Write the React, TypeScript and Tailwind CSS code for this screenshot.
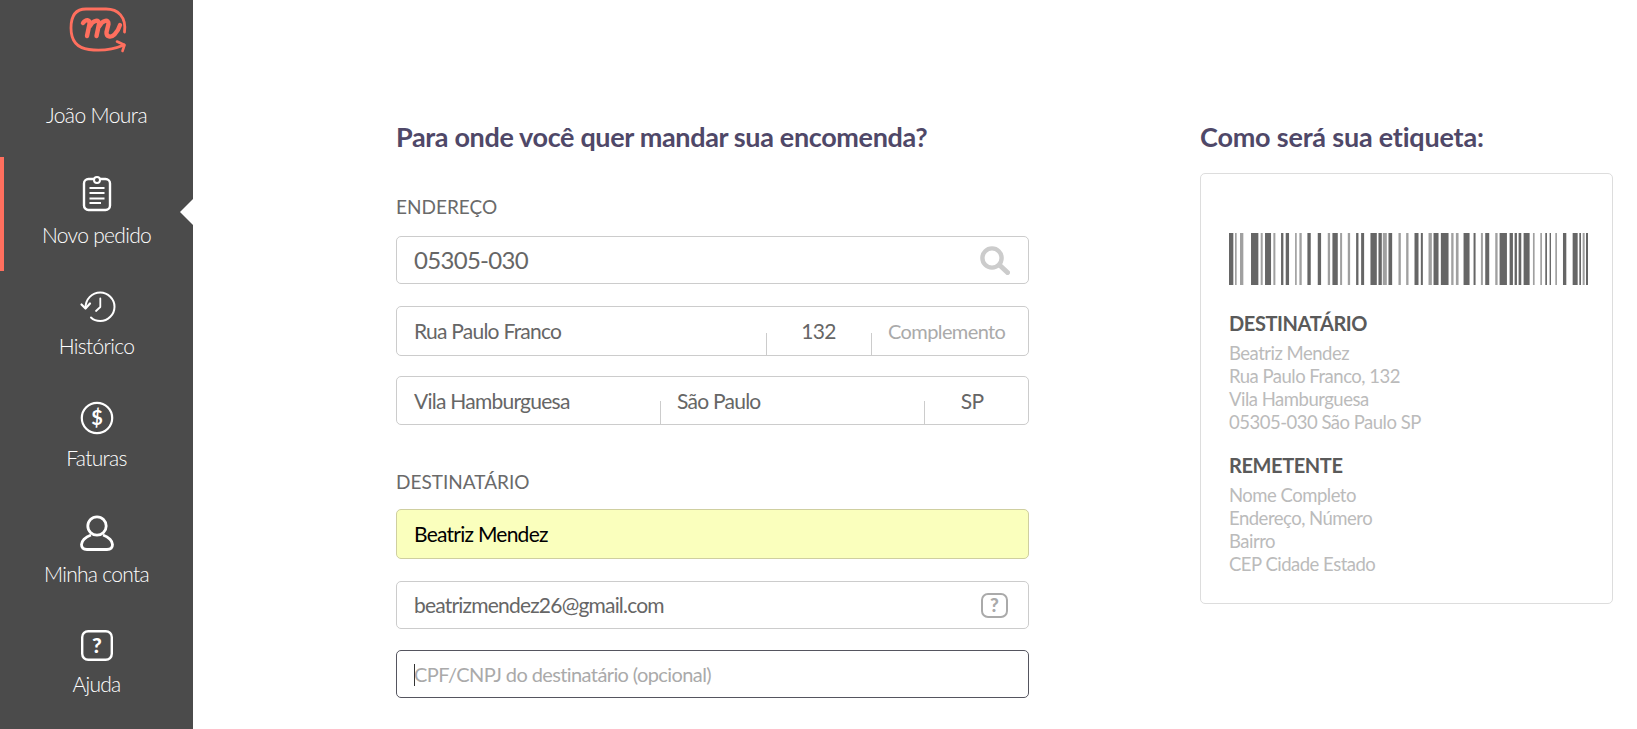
const font = { fontFamily: 'Lato, sans-serif' }

const barcode = [
  [117, 130, 1], [135, 140, 0], [150, 160, 0], [183, 205, 1], [212, 218, 0], [225, 243, 1], [250, 256, 0],
  [273, 280, 1], [287, 297, 1], [315, 320, 0], [328, 335, 0], [352, 362, 1], [383, 393, 1], [413, 420, 0],
  [427, 443, 1], [450, 456, 0], [473, 480, 0], [498, 505, 1], [513, 522, 1], [541, 560, 1], [565, 575, 1],
  [578, 590, 0], [595, 606, 1], [625, 632, 0], [648, 655, 0], [673, 685, 1], [692, 698, 1], [715, 725, 0],
  [730, 745, 1], [752, 775, 1], [783, 790, 0], [797, 805, 0], [820, 838, 1], [850, 856, 1], [872, 878, 0],
  [885, 897, 1], [915, 922, 0], [928, 950, 1], [958, 968, 1], [973, 980, 1], [985, 993, 1], [1000, 1018, 1],
  [1028, 1033, 0], [1050, 1055, 0], [1065, 1070, 1], [1078, 1082, 1], [1095, 1100, 0], [1118, 1128, 1],
  [1147, 1162, 1], [1167, 1172, 1], [1177, 1183, 0], [1187, 1193, 1],
]

function Logo() {
  return (
    <svg width="70" height="60" viewBox="0 0 70 60" fill="none" stroke="#ff6f5e" strokeLinecap="round" strokeLinejoin="round">
      <path d="M62.5 32C64.5 17 56 9 44 9L24 9C14 9 9 16 9 28C9 41 15 48 27 49.5C37 50.8 50 50 62 45" strokeWidth="2.8" />
      <path d="M55 41.5L62.5 45L60.5 51" strokeWidth="2.6" />
      <path d="M21 23C24 19 28 19 27.5 24L25 36" strokeWidth="4.4" />
      <path d="M28 26C31 20 37.5 19 37 24L34.5 36" strokeWidth="4.4" />
      <path d="M37.5 26C40.5 20 47 19 46.5 24L44.5 32C44 37 49 38 52.5 34.5C55 32 57 28.5 58 25" strokeWidth="4.4" />
    </svg>
  )
}

function ClipboardIcon() {
  return (
    <svg width="30" height="36" viewBox="0 0 30 36" fill="none" stroke="white">
      <rect x="2" y="3" width="26" height="31" rx="4.5" strokeWidth="2.4" />
      <circle cx="15" cy="4" r="3" fill="#4b4b4b" strokeWidth="2" />
      <path d="M7.5 12H22.5M7.5 17H22.5M7.5 22.5H22.5M7.5 27H19" strokeWidth="1.8" />
    </svg>
  )
}

function HistoryIcon() {
  return (
    <svg width="50" height="38" viewBox="0 0 50 38" fill="none" stroke="white" strokeLinecap="round" strokeLinejoin="round">
      <path d="M13.5 23C13.5 14 20 7.5 28.3 7.5C36 7.5 42.5 14 42.5 21.7C42.5 29.5 36 36 28.3 36C25 36 21.5 35 19 32.5" strokeWidth="2" />
      <path d="M9.5 19.5L13.5 23.5L18 18.5" strokeWidth="2.2" />
      <path d="M28.3 13.5V22L24 26" strokeWidth="1.8" />
    </svg>
  )
}

function DollarIcon() {
  return (
    <svg width="34" height="34" viewBox="0 0 34 34" fill="none" stroke="white">
      <circle cx="17" cy="17" r="15.2" strokeWidth="2.2" />
      <text x="17" y="24" textAnchor="middle" fill="white" stroke="none" fontSize="20" fontWeight="700" fontFamily="Lato, sans-serif">$</text>
    </svg>
  )
}

function PersonIcon() {
  return (
    <svg width="34" height="36" viewBox="0 0 34 36" fill="none" stroke="white" strokeWidth="2.8">
      <circle cx="17" cy="11" r="9.2" />
      <path d="M11 20C5 22 1.5 26 1.5 29.5C1.5 33 4 34.5 7 34.5H27C30 34.5 32.5 33 32.5 29.5C32.5 26 29 22 23 20" />
    </svg>
  )
}

function HelpIcon({ width, height, color, size, stroke }: { width: number; height: number; color: string; size: number; stroke: number }) {
  return (
    <svg width={width} height={height} viewBox={`0 0 ${width} ${height}`} fill="none" stroke={color}>
      <rect x={stroke / 2} y={stroke / 2} width={width - stroke} height={height - stroke} rx="6" strokeWidth={stroke} />
      <text x={width / 2} y={height / 2 + size * 0.36} textAnchor="middle" fill={color} stroke="none" fontSize={size} fontWeight="900" fontFamily="Lato, sans-serif">?</text>
    </svg>
  )
}

function SearchIcon() {
  return (
    <svg width="30" height="29" viewBox="0 0 30 29" fill="none" stroke="#cccccc" strokeLinecap="round">
      <circle cx="12" cy="12" r="9.6" strokeWidth="4.4" />
      <path d="M20 19.5L27.5 26.5" strokeWidth="5" />
    </svg>
  )
}

function NavItem({ label, icon, active, height }: { label: string; icon: React.ReactNode; active?: boolean; height: string }) {
  return (
    <div className={`relative flex flex-col items-center ${height}`}>
      {active ? <div className="absolute left-0 top-0 h-[114px] w-1 bg-[#ff6f5e]" /> : null}
      {active ? (
        <div className="absolute right-0 top-[42px] h-0 w-0 border-y-[13px] border-r-[13px] border-y-transparent border-r-white" />
      ) : null}
      <div className="flex h-[55px] items-end justify-center">{icon}</div>
      <div className="mt-[9px] text-[21px] leading-[28px] font-light tracking-[-0.7px] text-white">{label}</div>
    </div>
  )
}

function Cell({ text, width, center, muted, divider, tall }: { text: string; width: string; center?: boolean; muted?: boolean; divider?: boolean; tall?: boolean }) {
  return (
    <div className={`relative flex items-center ${width} ${center ? 'justify-center' : 'pl-[17px]'}`}>
      {divider ? <div className={`absolute left-0 bottom-0 w-px bg-[#cccccc] ${tall ? 'h-[23px]' : 'h-[22px]'}`} /> : null}
      <span className={muted ? 'text-[20px] tracking-[-0.6px] text-[#aaaaaa]' : 'text-[21px] tracking-[-0.75px] text-[#666666]'}>{text}</span>
    </div>
  )
}

function LabelBlock({ title, lines }: { title: string; lines: string[] }) {
  return (
    <div>
      <div className="text-[20px] leading-[24px] font-bold tracking-[-0.4px] text-[#5a5a5a]">{title}</div>
      <div className="mt-[7px] text-[18.5px] leading-[23px] tracking-[-0.5px] text-[#bbbbbb]">
        {lines.map((line) => (
          <div key={line}>{line}</div>
        ))}
      </div>
    </div>
  )
}

export default function App() {
  return (
    <div className="flex h-[729px] w-full overflow-hidden bg-white" style={font}>
      <aside className="w-[193px] shrink-0 bg-[#4b4b4b]">
        <div className="flex h-[60px] justify-center">
          <Logo />
        </div>
        <div className="mt-[41px] text-center text-[21px] leading-[28px] font-light tracking-[-0.6px] text-white">João Moura</div>
        <nav className="mt-[28px]">
          <NavItem label="Novo pedido" icon={<ClipboardIcon />} active height="h-[111px]" />
          <NavItem label="Histórico" icon={<HistoryIcon />} height="h-[112px]" />
          <NavItem label="Faturas" icon={<DollarIcon />} height="h-[116px]" />
          <NavItem label="Minha conta" icon={<PersonIcon />} height="h-[110px]" />
          <NavItem label="Ajuda" icon={<HelpIcon width={32} height={31} color="white" size={21} stroke={2.4} />} height="h-[110px]" />
        </nav>
      </aside>

      <main className="flex flex-1 pt-[119px]">
        <section className="ml-[203px] w-[633px] shrink-0">
          <h1 className="text-[27px] leading-[36px] font-bold tracking-[-0.35px] text-[#4f4868]">Para onde você quer mandar sua encomenda?</h1>

          <div className="mt-[40px] text-[19px] leading-[24px] text-[#6a6a6a]">ENDEREÇO</div>
          <div className="mt-[17px] flex h-[48px] items-center justify-between rounded-[5px] border border-[#cccccc] pr-[18px] pl-[17px]">
            <span className="text-[24px] tracking-[-0.7px] text-[#666666]">05305-030</span>
            <SearchIcon />
          </div>
          <div className="mt-[22px] flex h-[50px] rounded-[5px] border border-[#cccccc]">
            <Cell text="Rua Paulo Franco" width="w-[369px]" />
            <Cell text="132" width="w-[105px]" center divider />
            <Cell text="Complemento" width="flex-1" muted divider />
          </div>
          <div className="mt-[20px] flex h-[49px] rounded-[5px] border border-[#cccccc]">
            <Cell text="Vila Hamburguesa" width="w-[263px]" />
            <Cell text="São Paulo" width="w-[264px]" divider tall />
            <Cell text="SP" width="flex-1 pr-[8px]" center divider tall />
          </div>

          <div className="mt-[45px] text-[19px] leading-[24px] text-[#6a6a6a]">DESTINATÁRIO</div>
          <div className="mt-[15px] flex h-[50px] items-center rounded-[5px] border border-[#cfcfa0] bg-[#faffbd] pl-[17px]">
            <span className="text-[21px] tracking-[-0.75px] text-black">Beatriz Mendez</span>
          </div>
          <div className="mt-[22px] flex h-[48px] items-center justify-between rounded-[5px] border border-[#cccccc] pr-[20px] pl-[17px]">
            <span className="text-[21px] tracking-[-0.8px] text-[#666666]">beatrizmendez26@gmail.com</span>
            <HelpIcon width={27} height={25} color="#aaaaaa" size={19} stroke={2} />
          </div>
          <div className="relative mt-[21px] flex h-[48px] items-center rounded-[5px] border border-[#55555f] pl-[17px]">
            <div className="absolute top-[13px] left-[17px] h-[22px] w-px bg-[#333333]" />
            <span className="text-[20px] tracking-[-0.6px] text-[#aaaaaa]">CPF/CNPJ do destinatário (opcional)</span>
          </div>
        </section>

        <section className="ml-[171px] w-[413px] shrink-0">
          <h2 className="text-[27px] leading-[36px] font-bold tracking-[-0.2px] text-[#4f4868]">Como será sua etiqueta:</h2>
          <div className="mt-[18px] h-[431px] rounded-[5px] border border-[#dddddd] pt-[59px] pl-[28px]">
            <svg width="359" height="52" viewBox="117 0 1076 52" preserveAspectRatio="none" className="block">
              {barcode.map(([start, end, dark]) => (
                <rect key={start} x={start} y="0" width={end - start} height="52" fill={dark ? '#666666' : '#a0a0a0'} />
              ))}
            </svg>
            <div className="mt-[26px] flex flex-col gap-[19px]">
              <LabelBlock title="DESTINATÁRIO" lines={['Beatriz Mendez', 'Rua Paulo Franco, 132', 'Vila Hamburguesa', '05305-030 São Paulo SP']} />
              <LabelBlock title="REMETENTE" lines={['Nome Completo', 'Endereço, Número', 'Bairro', 'CEP Cidade Estado']} />
            </div>
          </div>
        </section>
      </main>
    </div>
  )
}
